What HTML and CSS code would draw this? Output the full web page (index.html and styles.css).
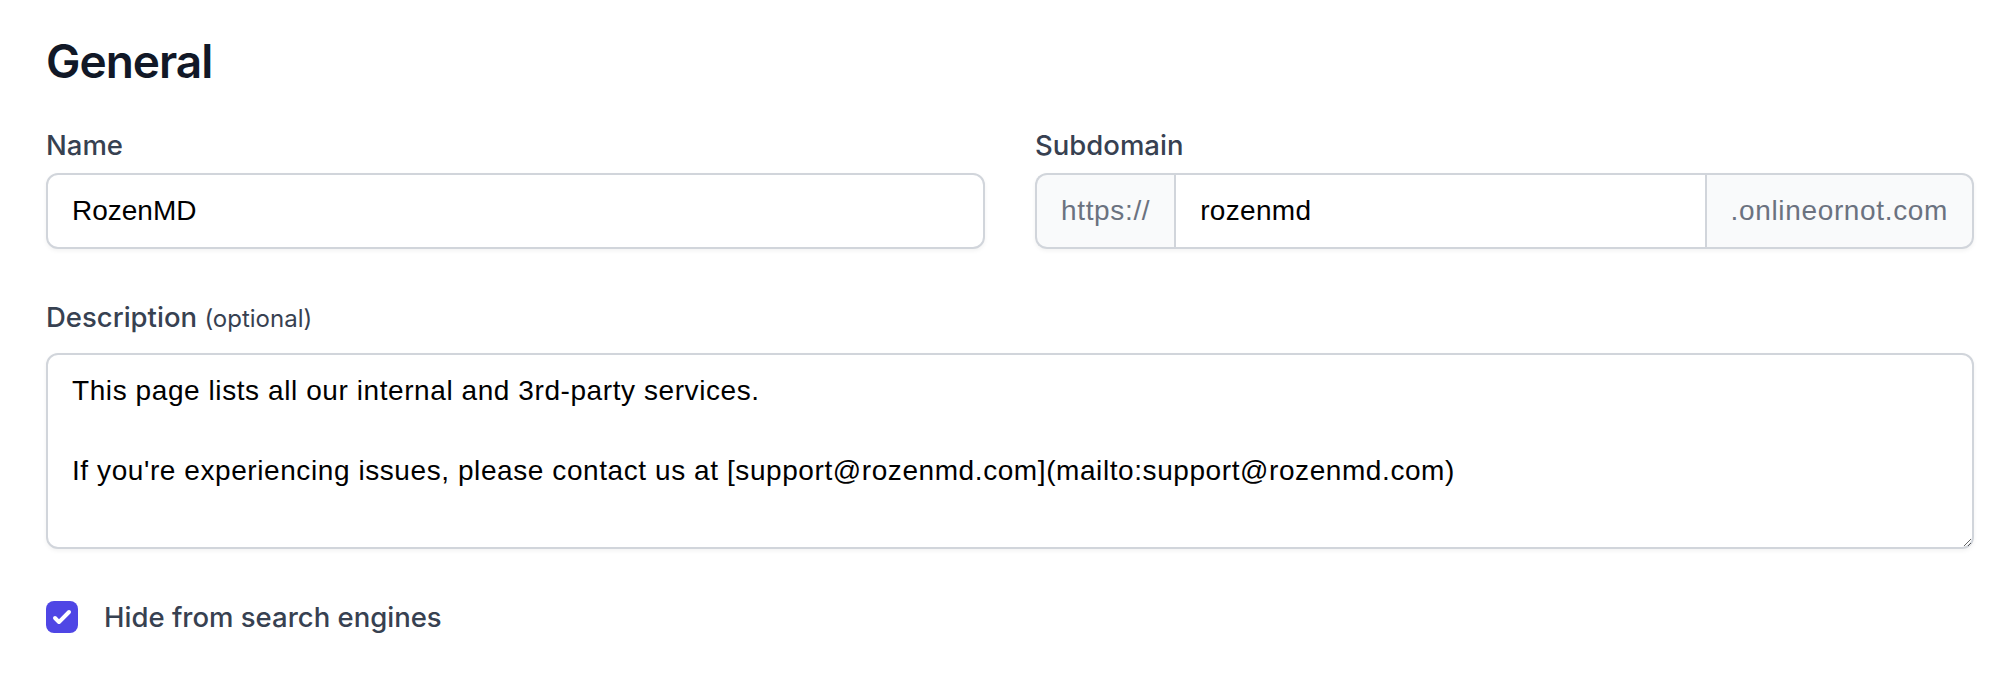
FILE: index.html
```html
<!DOCTYPE html>
<html lang="en">
<head>
<meta charset="utf-8">
<title>General</title>
<link rel="stylesheet" href="styles.css">
</head>
<body>
<main class="page">
  <h1 class="title">General</h1>
  <div class="form-grid">
    <div class="field">
      <label class="label" for="name">Name</label>
      <div class="control">
        <input id="name" class="text-input" type="text" value="RozenMD">
      </div>
    </div>
    <div class="field">
      <label class="label" for="subdomain">Subdomain</label>
      <div class="control addon-group">
        <span class="addon addon-left">https://</span>
        <input id="subdomain" class="addon-input" type="text" value="rozenmd">
        <span class="addon addon-right">.onlineornot.com</span>
      </div>
    </div>
    <div class="field field-wide">
      <label class="label" for="description">Description <span class="optional">(optional)</span></label>
      <div class="control control-area">
        <textarea id="description" class="text-area" rows="4">This page lists all our internal and 3rd-party services.

If you're experiencing issues, please contact us at [support@rozenmd.com](mailto:support@rozenmd.com)</textarea>
      </div>
    </div>
  </div>
  <label class="check-row">
    <span class="check-box">
      <svg viewBox="0 0 16 16" width="32" height="32" aria-hidden="true"><path fill="#fff" d="M12.207 4.793a1 1 0 010 1.414l-5 5a1 1 0 01-1.414 0l-2-2a1 1 0 011.414-1.414L6.5 9.086l4.293-4.293a1 1 0 011.414 0z"/></svg>
    </span>
    <span class="check-label">Hide from search engines</span>
  </label>
</main>
</body>
</html>
```

FILE: styles.css
```css
html, body {
  margin: 0;
  padding: 0;
  background: #ffffff;
}

.page {
  padding: 29px 38px 0 46px;
  font-family: Inter, "Noto Sans", sans-serif;
}

.title {
  margin: 0;
  font-size: 46px;
  line-height: 64px;
  font-weight: 600;
  letter-spacing: -1px;
  color: #111827;
}

.form-grid {
  margin-top: 32px;
  display: grid;
  grid-template-columns: 1fr 1fr;
  column-gap: 50px;
  row-gap: 48px;
}

.field-wide {
  grid-column: 1 / span 2;
}

.label {
  display: block;
  font-size: 27.5px;
  line-height: 40px;
  font-weight: 500;
  color: #374151;
}

.optional {
  font-size: 24px;
  font-weight: 400;
}

.control {
  margin-top: 8px;
}

.control-area {
  margin-top: 14px;
}

.text-input {
  display: block;
  width: 100%;
  box-sizing: border-box;
  height: 76px;
  padding: 0 24px;
  border: 2px solid #d1d5db;
  border-radius: 12px;
  box-shadow: 0 2px 4px rgba(0, 0, 0, 0.05);
  font-family: "Liberation Sans", Arial, sans-serif;
  font-size: 28px;
  color: #000000;
  background: #ffffff;
  outline: none;
}

.addon-group {
  display: flex;
  height: 76px;
  border-radius: 12px;
  box-shadow: 0 2px 4px rgba(0, 0, 0, 0.05);
}

.addon {
  display: flex;
  align-items: center;
  padding: 0 24px;
  background: #f9fafb;
  border: 2px solid #d1d5db;
  font-family: "Liberation Sans", Arial, sans-serif;
  font-size: 28px;
  letter-spacing: 0.65px;
  color: #6b7280;
  white-space: nowrap;
}

.addon-left {
  border-right: 0;
  border-radius: 12px 0 0 12px;
}

.addon-right {
  border-left: 0;
  border-radius: 0 12px 12px 0;
}

.addon-input {
  flex: 1;
  min-width: 0;
  box-sizing: border-box;
  height: 76px;
  padding: 0 24px;
  border: 2px solid #d1d5db;
  border-radius: 0;
  font-family: "Liberation Sans", Arial, sans-serif;
  font-size: 28px;
  letter-spacing: 0.3px;
  color: #000000;
  background: #ffffff;
  outline: none;
}

.text-area {
  display: block;
  width: 100%;
  box-sizing: border-box;
  padding: 16px 24px;
  border: 2px solid #d1d5db;
  border-radius: 12px;
  box-shadow: 0 2px 4px rgba(0, 0, 0, 0.05);
  font-family: "Liberation Sans", Arial, sans-serif;
  font-size: 28px;
  line-height: 40px;
  letter-spacing: 0.58px;
  color: #000000;
  background: #ffffff;
  resize: vertical;
  outline: none;
}

.check-row {
  display: flex;
  align-items: center;
  gap: 26px;
  margin-top: 48px;
  height: 40px;
}

.check-box {
  display: flex;
  align-items: center;
  justify-content: center;
  width: 32px;
  height: 32px;
  border-radius: 8px;
  background: #4f46e5;
}

.check-box svg {
  display: block;
}

.check-label {
  font-size: 27.5px;
  line-height: 40px;
  font-weight: 500;
  color: #374151;
}
```
